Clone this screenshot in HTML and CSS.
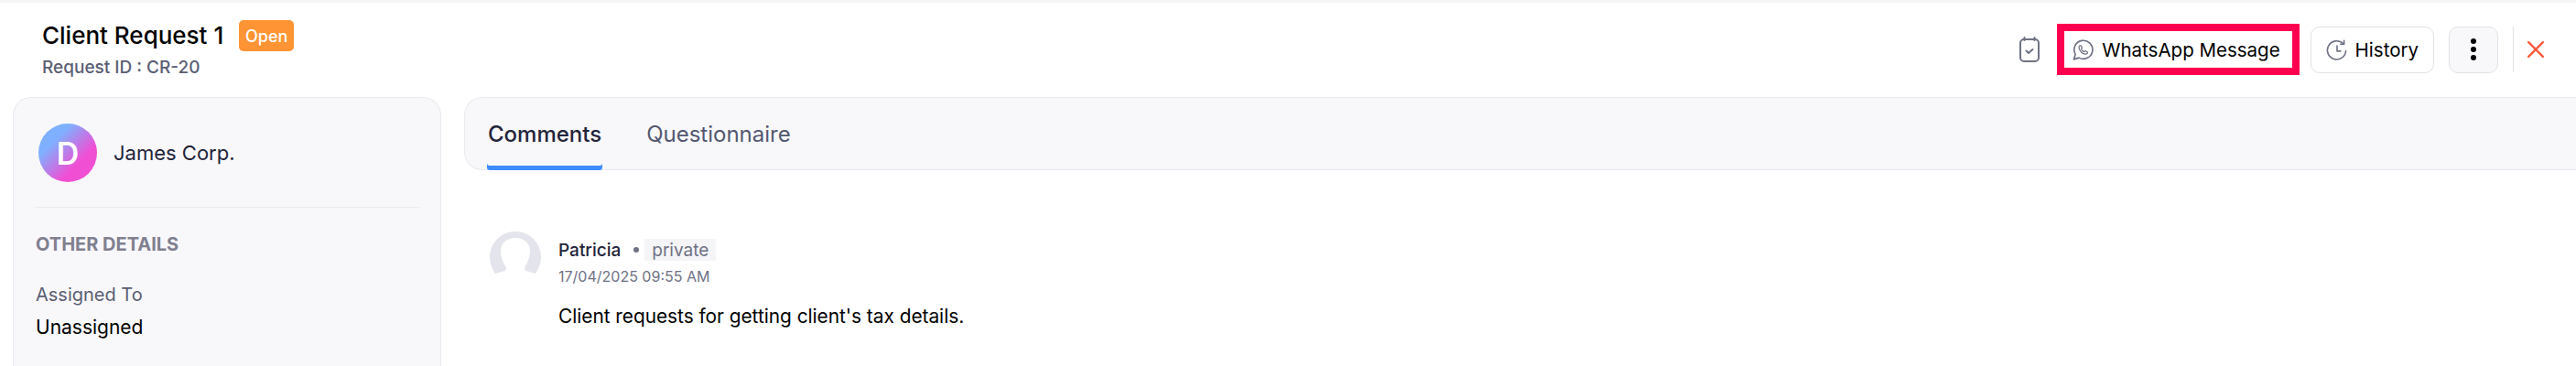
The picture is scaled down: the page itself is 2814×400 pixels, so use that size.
FILE: index.html
```html
<!DOCTYPE html>
<html lang="en">
<head>
    <meta charset="UTF-8">
    <title>Client Request 1</title>
    <link rel="stylesheet" href="styles.css">
</head>
<body>
    <!-- header -->
    <header class="page-head">
      <div class="head-info">
        <div class="title-row">
          <h1 class="title">Client Request 1</h1>
          <span class="status-badge">Open</span>
        </div>
        <p class="request-id">Request ID : CR-20</p>
      </div>
      <div class="head-actions">
        <svg class="task-icon" viewBox="0 0 22 28" fill="none" stroke="#6f7285" stroke-width="2" stroke-linecap="round" stroke-linejoin="round">
          <rect x="1" y="3" width="20" height="24" rx="4"/>
          <path d="M5.500 1v3M16.500 1v3"/>
          <path d="M7.500 15.500l2.500 2.500 4.500-4"/>
        </svg>
        <div class="highlight-box">
          <button class="btn btn-plain">
            <svg class="btn-icon" viewBox="0 0 24 24" fill="none" stroke="#6f7285" stroke-width="1.700" stroke-linejoin="round">
              <path d="M1.500 22.800l1.800-5.700A10.500 10.500 0 1 1 7.300 21z"/>
              <path d="M9 7c-.9 0-1.700.9-1.700 2.200 0 3.500 4 7.600 7.500 7.600 1.300 0 2.200-.8 2.200-1.700 0-.4-.1-.7-.4-.9l-1.800-.9c-.4-.2-.7-.1-.9.200l-.6.700c-1.600-.6-2.800-1.800-3.400-3.400l.7-.6c.3-.3.300-.6.200-.9l-.9-1.900c-.2-.3-.5-.4-.9-.4z" stroke-width="1.300"/>
            </svg>
            WhatsApp Message
          </button>
        </div>
        <button class="btn btn-history">
          <svg class="btn-icon" viewBox="0 0 24 24" fill="none" stroke="#6f7285" stroke-width="1.700" stroke-linecap="round" stroke-linejoin="round">
            <path d="M19.500 5A10.500 10.500 0 1 0 22.500 13"/>
            <path d="M12.500 7.500v6h4"/>
            <path d="M20.500 1.500v4h-4"/>
          </svg>
          History
        </button>
        <button class="btn-more" aria-label="More">
          <span class="dot"></span><span class="dot"></span><span class="dot"></span>
        </button>
        <span class="head-sep"></span>
        <svg class="close-icon" viewBox="0 0 18 18" fill="none" stroke="#ff5a3c" stroke-width="2.400" stroke-linecap="round">
          <path d="M1.200 1.200l15.600 15.600M16.800 1.200L1.200 16.800"/>
        </svg>
      </div>
    </header>

    <div class="page-body">
      <!-- left card -->
      <aside class="side-card">
        <div class="client-row">
          <div class="client-avatar">D</div>
          <span class="client-name">James Corp.</span>
        </div>
        <div class="details">
          <h3 class="details-title">OTHER DETAILS</h3>
          <p class="details-label">Assigned To</p>
          <p class="details-value">Unassigned</p>
        </div>
      </aside>

      <!-- comments -->
      <main class="content">
        <nav class="tabs">
          <a class="tab active" href="#">Comments</a>
          <a class="tab" href="#">Questionnaire</a>
        </nav>
        <div class="comment">
          <svg class="comment-avatar" viewBox="0 0 56 46">
            <path fill="#e4e4ec" d="M28 0C12.500 0 0 12.500 0 28c0 6 2 12 6 18l10-3c2-.7 2.700-2.800 1.300-4.700C14 33.500 12 27 12 21 12 12.500 19 7 28 7s16 5.500 16 14c0 6-2 12.500-5.300 17.300-1.400 1.900-.7 4 1.300 4.700l10 3c4-6 6-12 6-18C56 12.500 43.500 0 28 0z"/>
          </svg>
          <div class="comment-main">
            <div class="comment-author">
              <span class="author-name">Patricia</span>
              <span class="author-dot"></span>
              <span class="private-tag">private</span>
            </div>
            <p class="comment-date">17/04/2025 09:55 AM</p>
            <p class="comment-text">Client requests for getting client's tax details.</p>
          </div>
        </div>
      </main>
    </div>
</body>
</html>
```

FILE: styles.css
```css
* {
  box-sizing: border-box;
  margin: 0;
  padding: 0;
}

body {
  font-family: Inter, "Liberation Sans", sans-serif;
  background-color: #fff;
  color: #000;
  height: 400px;
  overflow: hidden;
  border-top: 3px solid #f5f5f7;
}

/* header */
.page-head {
  display: flex;
  justify-content: space-between;
  align-items: flex-start;
  height: 103px;
  padding: 19px 35px 0 46px;
}

.title-row {
  display: flex;
  align-items: center;
  gap: 17px;
}

.title {
  font-size: 26px;
  font-weight: 500;
  line-height: 34px;
}

.status-badge {
  display: flex;
  align-items: center;
  justify-content: center;
  width: 60px;
  height: 34px;
  background-color: #ff9434;
  color: #fff;
  font-size: 18px;
  font-weight: 500;
  border-radius: 5px;
}

.request-id {
  margin-top: 6px;
  font-size: 19px;
  font-weight: 500;
  line-height: 24px;
  color: #5a5e73;
}

.head-actions {
  display: flex;
  align-items: center;
  height: 56px;
  margin-top: 4px;
}

.task-icon {
  width: 22px;
  height: 28px;
  margin-right: 19px;
}

.highlight-box {
  border: 8px solid #ff0050;
  height: 56px;
  margin-right: 12px;
}

.btn {
  display: flex;
  align-items: center;
  gap: 9px;
  font-family: inherit;
  font-size: 20.500px;
  color: #000;
  background: #fff;
  cursor: pointer;
}

.btn-plain {
  height: 40px;
  padding: 0 13px 0 9px;
  border: none;
}

.btn-history {
  height: 51px;
  padding: 0 16px;
  border: 1px solid #e6e0e4;
  border-radius: 10px;
}

.btn-icon {
  width: 23px;
  height: 23px;
  flex-shrink: 0;
}

.btn-more {
  display: flex;
  flex-direction: column;
  align-items: center;
  justify-content: center;
  gap: 3px;
  width: 54px;
  height: 51px;
  margin-left: 16px;
  background-color: #f8f8fb;
  border: 1px solid #e6e0e4;
  border-radius: 10px;
  cursor: pointer;
}

.dot {
  width: 6px;
  height: 6px;
  background-color: #000;
  border-radius: 50%;
}

.head-sep {
  width: 1px;
  height: 50px;
  margin: 0 15px 0 16px;
  background-color: #e6e0e4;
}

.close-icon {
  width: 18px;
  height: 18px;
}

/* page body */
.page-body {
  display: flex;
  gap: 25px;
  padding-left: 14px;
  height: 294px;
}

.side-card {
  flex: 0 0 468px;
  padding: 28px 23px 0 24px;
  background-color: #f8f8fb;
  border: 1px solid #e9e9f0;
  border-bottom: none;
  border-radius: 20px 20px 0 0;
}

.client-row {
  display: flex;
  align-items: center;
  gap: 18px;
  padding: 0 0 27px 3px;
  border-bottom: 1px solid #e9e9f0;
}

.client-avatar {
  display: flex;
  align-items: center;
  justify-content: center;
  width: 64px;
  height: 64px;
  background: linear-gradient(135deg, #7fb0ff 28%, #f04fd4 68%);
  color: #fff;
  font-size: 34px;
  font-weight: 600;
  border-radius: 50%;
}

.client-name {
  font-size: 22px;
  color: #23243a;
}

.details {
  padding-top: 28px;
}

.details-title {
  font-size: 20px;
  font-weight: 700;
  line-height: 24px;
  color: #80808f;
}

.details-label {
  margin-top: 31px;
  font-size: 20px;
  line-height: 24px;
  color: #5a5e73;
}

.details-value {
  margin-top: 11px;
  font-size: 21px;
  line-height: 26px;
}

/* tabs + comment */
.content {
  flex: 1;
  min-width: 0;
}

.tabs {
  display: flex;
  gap: 47px;
  height: 80px;
  padding-left: 24px;
  background-color: #f8f8fb;
  border: 1px solid #e9e9f0;
  border-right: none;
  border-radius: 20px 0 0 20px;
}

.tab {
  display: flex;
  align-items: center;
  height: 79px;
  padding: 0 1px;
  font-size: 24px;
  color: #545870;
  text-decoration: none;
}

.tab.active {
  font-weight: 500;
  color: #23243a;
  box-shadow: inset 0 -5px 0 #3f8cff;
  border-radius: 0 0 3px 3px;
}

.comment {
  display: flex;
  gap: 19px;
  padding: 67px 0 0 28px;
}

.comment-avatar {
  width: 56px;
  height: 46px;
  flex-shrink: 0;
}

.comment-author {
  display: flex;
  align-items: center;
  height: 24px;
  margin-top: 8px;
  font-size: 19px;
}

.author-name {
  font-weight: 500;
  color: #23243a;
}

.author-dot {
  width: 6px;
  height: 6px;
  margin: 0 6px 0 14px;
  background-color: #6f7285;
  border-radius: 50%;
}

.private-tag {
  display: flex;
  align-items: center;
  height: 24px;
  padding: 0 8px;
  background-color: #f5f5f7;
  color: #6f7285;
}

.comment-date {
  margin-top: 6px;
  font-size: 16px;
  line-height: 22px;
  color: #6f7285;
}

.comment-text {
  margin-top: 19px;
  font-size: 20.800px;
  line-height: 28px;
}
```
